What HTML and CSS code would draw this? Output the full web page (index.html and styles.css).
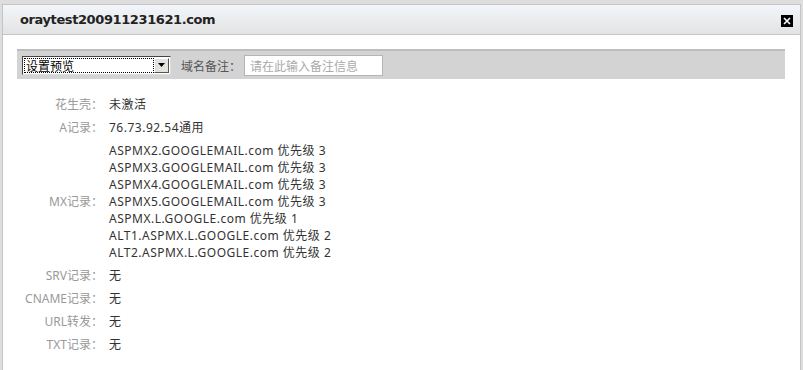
FILE: index.html
```html
<!DOCTYPE html>
<html lang="zh-CN">
<head>
<meta charset="utf-8">
<title>oraytest200911231621.com</title>
<link rel="stylesheet" href="styles.css">
</head>
<body>
<div class="dialog">
  <div class="titlebar">
    <span class="title">oraytest200911231621.com</span>
    <span class="close" aria-label="关闭">
      <svg width="12" height="12" viewBox="0 0 12 12"><rect width="12" height="12" fill="#000"/><path d="M3 3 L9 9 M9 3 L3 9" stroke="#fff" stroke-width="1.6" fill="none"/></svg>
    </span>
  </div>
  <div class="body">
    <div class="toolbar">
      <div class="select">
        <span class="select-text">设置预览</span>
        <span class="select-btn"><svg width="7" height="4" viewBox="0 0 7 4"><path d="M0 0 H7 L3.5 4 Z" fill="#000"/></svg></span>
      </div>
      <span class="note-label">域名备注：</span>
      <input class="note-input" type="text" placeholder="请在此输入备注信息">
    </div>
    <div class="records">
      <div class="row"><div class="label">花生壳：</div><div class="value">未激活</div></div>
      <div class="row"><div class="label">A记录：</div><div class="value">76.73.92.54通用</div></div>
      <div class="row"><div class="label">MX记录：</div>
        <div class="value">
          <div>ASPMX2.GOOGLEMAIL.com 优先级 3</div>
          <div>ASPMX3.GOOGLEMAIL.com 优先级 3</div>
          <div>ASPMX4.GOOGLEMAIL.com 优先级 3</div>
          <div>ASPMX5.GOOGLEMAIL.com 优先级 3</div>
          <div>ASPMX.L.GOOGLE.com 优先级 1</div>
          <div>ALT1.ASPMX.L.GOOGLE.com 优先级 2</div>
          <div>ALT2.ASPMX.L.GOOGLE.com 优先级 2</div>
        </div>
      </div>
      <div class="row"><div class="label">SRV记录：</div><div class="value">无</div></div>
      <div class="row"><div class="label">CNAME记录：</div><div class="value">无</div></div>
      <div class="row"><div class="label">URL转发：</div><div class="value">无</div></div>
      <div class="row"><div class="label">TXT记录：</div><div class="value">无</div></div>
    </div>
  </div>
</div>
</body>
</html>
```

FILE: styles.css
```css
html, body {
  margin: 0;
  padding: 0;
  height: 100%;
  overflow: hidden;
}
body {
  background: #dedede;
  font-family: "Noto Sans", "Noto Sans CJK SC", sans-serif;
  font-size: 12px;
  color: #333;
  padding: 4px 2px 0 2px;
  box-sizing: border-box;
}
.dialog {
  background: #fff;
  border: 1px solid #c4c4c4;
  border-bottom: none;
  height: 100%;
  box-sizing: border-box;
}
.titlebar {
  height: 29px;
  display: flex;
  align-items: center;
  justify-content: space-between;
  padding: 0 7px 0 17px;
  background: linear-gradient(#f2f6fa, #e3e3e3);
  border-bottom: 1px solid #c6c6c6;
}
.title {
  font-family: "DejaVu Sans", Verdana, sans-serif;
  font-weight: bold;
  font-size: 13px;
  letter-spacing: -0.4px;
  color: #222;
}
.close {
  display: flex;
  width: 12px;
  height: 12px;
  margin-top: 2px;
}
.body {
  padding: 14px 15px 0 14px;
}
.toolbar {
  display: flex;
  align-items: center;
  height: 28px;
  background: #d3d3d3;
  border-top: 2px solid #bdbdbd;
  padding-left: 5px;
}
.select {
  display: flex;
  width: 149px;
  height: 19px;
  box-sizing: border-box;
  border: 1px solid #444;
  border-right-color: #ddd;
  border-bottom-color: #ddd;
  background: #fff;
  padding: 1px;
}
.select-text {
  flex: 1;
  border: 1px dotted #000;
  line-height: 13px;
  font-family: "Noto Sans CJK SC", sans-serif;
  font-size: 12px;
  color: #000;
  padding-left: 1px;
}
.select-btn {
  width: 15px;
  display: flex;
  align-items: center;
  justify-content: center;
  background: #e4e2dc;
  border: 1px solid;
  border-color: #fff #555 #555 #fff;
  box-sizing: border-box;
}
.note-label {
  margin-left: 10px;
  color: #555;
  font-family: "Noto Sans CJK SC", sans-serif;
  font-size: 12px;
}
.note-input {
  margin-left: 3px;
  width: 139px;
  height: 21px;
  box-sizing: border-box;
  border: 1px solid #b5b5b5;
  padding: 0 5px;
  font-family: "Noto Sans CJK SC", sans-serif;
  font-size: 12px;
  background: #fff;
  outline: none;
}
.note-input::placeholder {
  color: #aaa;
}
.records {
  margin-top: 14px;
}
.row {
  display: flex;
  align-items: center;
  padding: 3px 0;
  line-height: 17px;
}
.label {
  width: 86px;
  text-align: right;
  color: #999;
  padding-right: 6px;
}
.value {
  color: #333;
  letter-spacing: 0.5px;
}
```
